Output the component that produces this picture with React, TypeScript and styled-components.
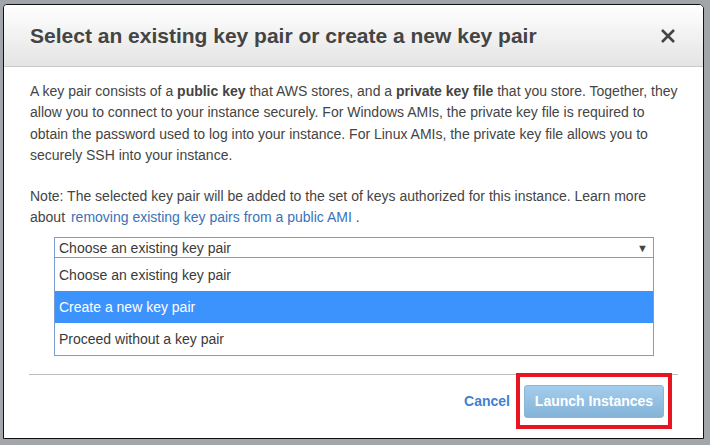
import React from "react";
import styled, {createGlobalStyle} from "styled-components";

const GlobalStyle = createGlobalStyle`
  html, body {
    margin: 0;
    padding: 0;
    background: #a2a5a9;
  }

  body {
    font-family: "Liberation Sans", Arial, sans-serif;
  }
`

const Backdrop = styled.div`
  width: 710px;
  height: 445px;
  box-sizing: border-box;
  padding: 4px 6px 6px 3px;
  background: #a2a5a9;
`

const Modal = styled.div`
  display: flex;
  flex-direction: column;
  height: 100%;
  box-sizing: border-box;
  border: 1px solid #111;
  border-radius: 4px 5px 0 0;
  background: #fff;
  overflow: hidden;
`

const Header = styled.div`
  display: flex;
  align-items: center;
  justify-content: space-between;
  height: 61px;
  padding: 0 26px 0 26px;
  background: linear-gradient(#ffffff, #e4e4e4);
  border-bottom: 1px solid #c9c9c9;

  h2 {
    margin: 0;
    font-size: 21px;
    font-weight: bold;
    color: #444;
  }
`

const CloseButton = styled.button`
  border: none;
  background: none;
  padding: 0;
  margin-right: 1px;
  width: 16px;
  height: 16px;
  cursor: pointer;
`

const Body = styled.div`
  padding: 14px 26px 0 26px;
  color: #444;
  font-size: 14px;
  line-height: 21.3px;

  p {
    margin: 0 0 20px 0;
    white-space: nowrap;
  }

  p:last-of-type {
    margin-bottom: 8px;
  }

  a {
    color: #3a72b8;
    text-decoration: none;
    margin-left: 2px;
  }
`

const SelectWrap = styled.div`
  margin-left: 24px;
  width: 600px;
  font-size: 14px;
  color: #3a3a3a;
`

const SelectBox = styled.div`
  display: flex;
  align-items: center;
  justify-content: space-between;
  box-sizing: border-box;
  height: 20px;
  padding: 1px 5px 0 4px;
  border: 1px solid #7b9bd3;
  border-bottom: none;
  line-height: 18px;

  span.arrow {
    font-size: 11px;
    color: #444;
  }
`

const OptionList = styled.ul`
  list-style: none;
  margin: 0;
  padding: 0;
  border: 1px solid #7b9bd3;
`

const Option: any = styled.li`
  height: 32px;
  line-height: 33px;
  padding: 0 4px;
  background: ${({active}: any) => active ? '#3c93fd' : '#fff'};
  color: ${({active}: any) => active ? '#fff' : '#3a3a3a'};

  &:first-child {
    height: 33px;
    line-height: 35px;
  }
`

const Footer = styled.div`
  margin: 18px 25px 0 25px;
  border-top: 1px solid #bdbdbd;
  display: flex;
  justify-content: flex-end;
  align-items: center;
  gap: 14px;
  padding: 10px 14px 0 0;
`

const CancelLink = styled.a`
  color: #3f7fd1;
  font-weight: bold;
  font-size: 14px;
  cursor: pointer;
`

const Highlight = styled.div`
  position: relative;
`

const RedFrame = styled.div`
  position: absolute;
  top: -12px;
  bottom: -11px;
  left: -8px;
  right: -8px;
  border: 4px solid #e8141f;
  pointer-events: none;
`

const PrimaryButton = styled.button`
  width: 140px;
  height: 33px;
  border: 1px solid #8db5d6;
  border-radius: 3px;
  background: linear-gradient(#a3cded, #84b3d8);
  color: #fff;
  font-family: "Liberation Sans", Arial, sans-serif;
  font-weight: bold;
  font-size: 14px;
  padding: 0;
`

const options = [
    'Choose an existing key pair',
    'Create a new key pair',
    'Proceed without a key pair',
];

const App: React.FC = () => {
    return (
        <Backdrop>
            <GlobalStyle/>
            <Modal>
                <Header>
                    <h2>Select an existing key pair or create a new key pair</h2>
                    <CloseButton aria-label="close">
                        <svg width="16" height="16" viewBox="0 0 16 16">
                            <path d="M2 2 L14 14 M14 2 L2 14" stroke="#444" strokeWidth="2.6"/>
                        </svg>
                    </CloseButton>
                </Header>
                <Body>
                    <p>
                        A key pair consists of a <b>public key</b> that AWS stores, and a <b>private key file</b> that
                        you store. Together, they<br/>
                        allow you to connect to your instance securely. For Windows AMIs, the private key file is
                        required to<br/>
                        obtain the password used to log into your instance. For Linux AMIs, the private key file
                        allows you to<br/>
                        securely SSH into your instance.
                    </p>
                    <p>
                        Note: The selected key pair will be added to the set of keys authorized for this instance.
                        Learn more<br/>
                        about <a href="#">removing existing key pairs from a public AMI</a> .
                    </p>
                    <SelectWrap>
                        <SelectBox>
                            <span>Choose an existing key pair</span>
                            <span className="arrow">▼</span>
                        </SelectBox>
                        <OptionList>
                            {options.map((o, i) =>
                                <Option key={o} active={i === 1}>{o}</Option>
                            )}
                        </OptionList>
                    </SelectWrap>
                </Body>
                <Footer>
                    <CancelLink>Cancel</CancelLink>
                    <Highlight>
                        <PrimaryButton>Launch Instances</PrimaryButton>
                        <RedFrame/>
                    </Highlight>
                </Footer>
            </Modal>
        </Backdrop>
    )
}

export default App;
